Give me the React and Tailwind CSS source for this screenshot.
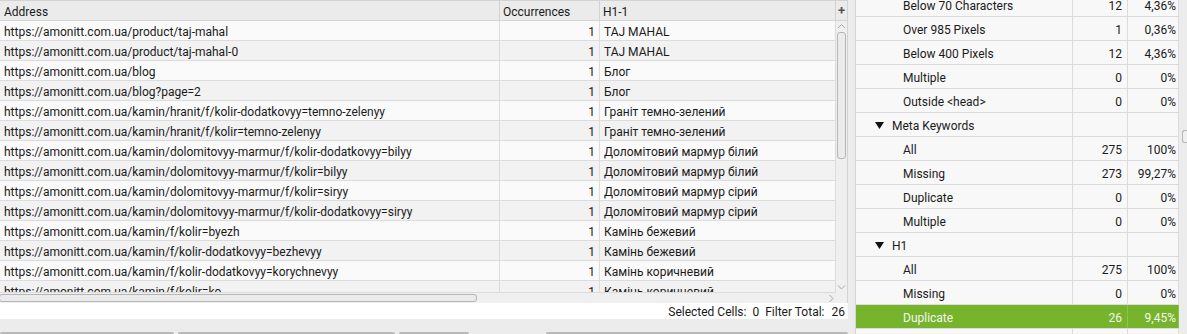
import React from 'react';

const rows = [
  ['https://amonitt.com.ua/product/taj-mahal', '1', 'TAJ MAHAL'],
  ['https://amonitt.com.ua/product/taj-mahal-0', '1', 'TAJ MAHAL'],
  ['https://amonitt.com.ua/blog', '1', 'Блог'],
  ['https://amonitt.com.ua/blog?page=2', '1', 'Блог'],
  ['https://amonitt.com.ua/kamin/hranit/f/kolir-dodatkovyy=temno-zelenyy', '1', 'Граніт темно-зелений'],
  ['https://amonitt.com.ua/kamin/hranit/f/kolir=temno-zelenyy', '1', 'Граніт темно-зелений'],
  ['https://amonitt.com.ua/kamin/dolomitovyy-marmur/f/kolir-dodatkovyy=bilyy', '1', 'Доломітовий мармур білий'],
  ['https://amonitt.com.ua/kamin/dolomitovyy-marmur/f/kolir=bilyy', '1', 'Доломітовий мармур білий'],
  ['https://amonitt.com.ua/kamin/dolomitovyy-marmur/f/kolir=siryy', '1', 'Доломітовий мармур сірий'],
  ['https://amonitt.com.ua/kamin/dolomitovyy-marmur/f/kolir-dodatkovyy=siryy', '1', 'Доломітовий мармур сірий'],
  ['https://amonitt.com.ua/kamin/f/kolir=byezh', '1', 'Камінь бежевий'],
  ['https://amonitt.com.ua/kamin/f/kolir-dodatkovyy=bezhevyy', '1', 'Камінь бежевий'],
  ['https://amonitt.com.ua/kamin/f/kolir-dodatkovyy=korychnevyy', '1', 'Камінь коричневий'],
  ['https://amonitt.com.ua/kamin/f/kolir=ko', '1', 'Камінь коричневий'],
];

const overview = [
  { label: 'Below 70 Characters', count: '12', pct: '4,36%' },
  { label: 'Over 985 Pixels', count: '1', pct: '0,36%' },
  { label: 'Below 400 Pixels', count: '12', pct: '4,36%' },
  { label: 'Multiple', count: '0', pct: '0%' },
  { label: 'Outside <head>', count: '0', pct: '0%' },
  { label: 'Meta Keywords', group: true },
  { label: 'All', count: '275', pct: '100%' },
  { label: 'Missing', count: '273', pct: '99,27%' },
  { label: 'Duplicate', count: '0', pct: '0%' },
  { label: 'Multiple', count: '0', pct: '0%' },
  { label: 'H1', group: true },
  { label: 'All', count: '275', pct: '100%' },
  { label: 'Missing', count: '0', pct: '0%' },
  { label: 'Duplicate', count: '26', pct: '9,45%', selected: true },
  { label: '', count: '', pct: '' },
];

const Chevron = ({ dir }) => {
  const d = {
    up: 'M1 5 L4.5 1.5 L8 5',
    down: 'M1 1.5 L4.5 5 L8 1.5',
    right: 'M1.5 1 L5 4.5 L1.5 8',
  }[dir];
  const size = dir === 'right' ? [7, 9] : [9, 7];
  return (
    <svg width={size[0]} height={size[1]} viewBox={`0 0 ${size[0]} ${size[1]}`}>
      <path d={d} fill="none" stroke="#a8a8a8" strokeWidth="1" />
    </svg>
  );
};

const App = () => {
  return (
    <div className="flex w-[1187px] h-[334px] overflow-hidden bg-[#ececec] text-[12px] text-[#1a1a1a] font-['Roboto',sans-serif] leading-none">
      {/* Left: data table */}
      <div className="flex flex-col w-[848px] shrink-0">
        {/* Header */}
        <div className="flex h-[21px] shrink-0 border-t border-b border-[#d3d3d3] bg-[#ebebeb]">
          <div className="w-[500px] flex items-center pt-[2px] px-[4px] border-r border-[#d3d3d3]">Address</div>
          <div className="w-[100px] flex items-center pt-[2px] px-[3px] border-r border-[#d3d3d3]">Occurrences</div>
          <div className="w-[236px] flex items-center pt-[2px] px-[3px] border-r border-[#d3d3d3]">H1-1</div>
          <div className="w-[12px] flex items-center justify-center border-r border-[#d3d3d3] font-bold text-[13px] text-[#555]">+</div>
        </div>

        {/* Body */}
        <div className="flex h-[282px] shrink-0">
          <div className="flex flex-col w-[836px]">
            <div className="h-[271px] overflow-hidden">
              {rows.map((r, i) => (
                <div
                  key={i}
                  className={`flex h-[20px] border-b border-[#dcdcdc] ${i % 2 === 0 ? 'bg-[#fafafa]' : 'bg-[#f2f2f2]'}`}
                >
                  <div className="w-[500px] flex items-center pt-[2px] px-[4px] border-r border-[#dcdcdc] whitespace-nowrap overflow-hidden">{r[0]}</div>
                  <div className="w-[100px] flex items-center justify-end pt-[2px] px-[4px] border-r border-[#dcdcdc]">{r[1]}</div>
                  <div className="w-[236px] flex items-center pt-[2px] px-[4px] border-r border-[#dcdcdc] whitespace-nowrap">{r[2]}</div>
                </div>
              ))}
            </div>
            {/* Horizontal scrollbar */}
            <div className="flex items-center h-[11px] bg-[#efefef] border-t border-[#dcdcdc]">
              <div className="w-[478px] h-[8px] -ml-[1px] rounded-[3px] border border-[#b5b5b5] bg-[#ebebeb]" />
              <div className="flex-1" />
              <div className="pr-[1px]"><Chevron dir="right" /></div>
            </div>
          </div>
          {/* Vertical scrollbar */}
          <div className="flex flex-col items-center w-[12px] bg-[#efefef] border-r border-[#d3d3d3]">
            <div className="pt-[2px] h-[11px]"><Chevron dir="up" /></div>
            <div className="w-[9px] h-[127px] rounded-[3px] border border-[#b5b5b5] bg-[#ebebeb]" />
            <div className="flex-1" />
            <div className="pb-[12px]"><Chevron dir="down" /></div>
          </div>
        </div>

        {/* Status bar */}
        <div className="flex items-center justify-end h-[16px] bg-white pt-[2px] pr-[3px] text-[12px]">
          <span>Selected Cells:</span>
          <span className="ml-[6px]">0</span>
          <span className="ml-[6px]">Filter Total:</span>
          <span className="ml-[7px]">26</span>
        </div>

        {/* Bottom button strip */}
        <div className="flex gap-[4px] h-[15px] pt-[13px] bg-[#ececec]">
          <div className="w-[175px] rounded-t-[4px] border border-[#b9b9b9] bg-[#f5f5f5]" />
          <div className="w-[218px] rounded-t-[4px] border border-[#b9b9b9] bg-[#f5f5f5]" />
          <div className="w-[70px] rounded-t-[4px] border border-[#b9b9b9] bg-[#f5f5f5]" />
          <div className="w-[70px]" />
          <div className="w-[303px] rounded-t-[4px] border border-[#b9b9b9] bg-[#fafafa]" />
        </div>
      </div>

      {/* Splitter */}
      <div className="w-[7px] shrink-0 bg-[#ececec]" />

      {/* Right: overview tree table */}
      <div className="flex w-[332px] shrink-0 border-l border-[#d6d6d6] text-[12px]">
        <div className="w-[323px] overflow-hidden bg-[#f8f8f8]">
          <div className="-mt-[7px]">
            {overview.map((o, i) => (
              <div
                key={i}
                className={`flex h-[24px] border-b border-[#dcdcdc] ${o.selected ? 'bg-[#76b52b] text-[#f4f4f4]' : ''}`}
              >
                <div className={`w-[217px] flex items-center pt-[3px] border-r ${o.selected ? 'border-[#76b52b]' : 'border-[#dcdcdc]'} ${o.group ? 'pl-[19px]' : 'pl-[47px]'}`}>
                  {o.group && (
                    <svg width="9" height="7" viewBox="0 0 9 7" className="mr-[8px] -mt-[2px]">
                      <path d="M0 0 H9 L4.5 7 Z" fill="#111" />
                    </svg>
                  )}
                  {o.label}
                </div>
                <div className={`w-[55px] flex items-center justify-end pt-[3px] pr-[5px] border-r ${o.selected ? 'border-[#8cc34f]' : 'border-[#dcdcdc]'}`}>{o.count}</div>
                <div className={`w-[51px] flex items-center justify-end pt-[3px] pr-[2px] border-r ${o.selected ? 'border-[#8cc34f]' : 'border-[#dcdcdc]'}`}>{o.pct}</div>
              </div>
            ))}
          </div>
        </div>
        <div className="flex-1 flex flex-col bg-[#ececec] pl-[3px]">
          <div className="h-[130px]" />
          <div className="h-[13px] rounded-l-[3px] border border-r-0 border-[#b5b5b5] bg-[#f0f0f0]" />
        </div>
      </div>
    </div>
  );
};

export default App;
